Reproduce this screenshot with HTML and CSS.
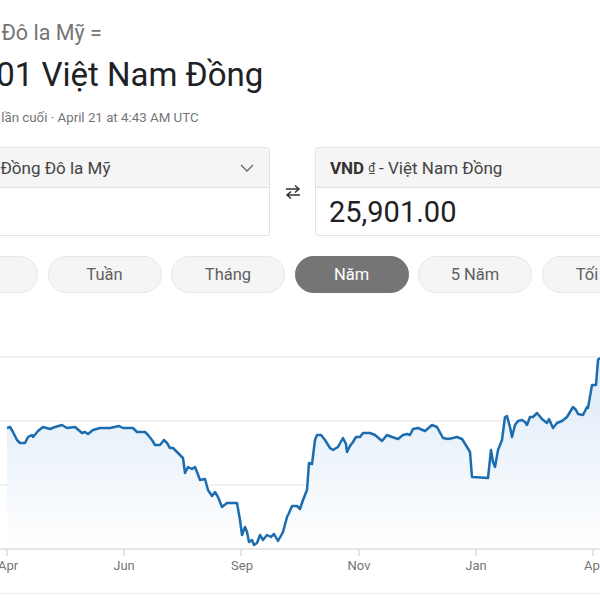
FILE: index.html
```html
<!DOCTYPE html>
<html lang="vi">
<head>
    <meta charset="UTF-8">
    <meta name="viewport" content="width=device-width, initial-scale=1.0">
    <title>Đô la Mỹ sang Việt Nam Đồng</title>
    <link rel="stylesheet" href="styles.css">
</head>
<body>

<div class="converter">
    <div class="rate-from">1 Đồng Đô la Mỹ =</div>
    <div class="rate-to">25,901 Việt Nam Đồng</div>
    <div class="updated">Cập nhật lần cuối · April 21 at 4:43 AM UTC</div>

    <div class="panels">
        <div class="box">
            <div class="box-head from">
                <span class="code">USD</span>
                <span class="symbol">$</span>
                <span class="name">- Đồng Đô la Mỹ</span>
                <svg class="chevron" width="14" height="8" viewBox="0 0 14 8">
                    <path d="M1 1 L7 7 L13 1" fill="none" stroke="#666" stroke-width="1.3"/>
                </svg>
            </div>
            <div class="box-value"></div>
        </div>

        <div class="swap">
            <svg width="16" height="16" viewBox="0 0 16 16">
                <path d="M1 5 H14 M10 1.5 L14 5 L10 8.5" fill="none" stroke="#333" stroke-width="1.5"/>
                <path d="M15 11 H2 M6 7.5 L2 11 L6 14.5" fill="none" stroke="#333" stroke-width="1.5"/>
            </svg>
        </div>

        <div class="box">
            <div class="box-head">
                <span class="code">VND</span>
                <span class="symbol">₫</span>
                <span class="name">- Việt Nam Đồng</span>
            </div>
            <div class="box-value">25,901.00</div>
        </div>
    </div>

    <div class="ranges">
        <button class="range">Ngày</button>
        <button class="range">Tuần</button>
        <button class="range">Tháng</button>
        <button class="range active">Năm</button>
        <button class="range">5 Năm</button>
        <button class="range">Tối đa</button>
    </div>
</div>

<svg class="chart" width="600" height="260" viewBox="0 340 600 260">
    <defs>
        <linearGradient id="area" x1="0" y1="0" x2="0" y2="1">
            <stop offset="0" stop-color="#dce9f7"/>
            <stop offset="1" stop-color="#ffffff"/>
        </linearGradient>
    </defs>

    <line x1="0" y1="357" x2="600" y2="357" class="grid"/>
    <line x1="0" y1="421" x2="600" y2="421" class="grid"/>
    <line x1="0" y1="485" x2="600" y2="485" class="grid"/>

    <path class="area" d="M7 428 L10 427 L13 432 L17 440 L20 443 L25 443 L28 437 L32 435 L33 437 L38 431 L43 427 L50 429 L55 427 L62 425 L67 428 L75 427 L82 433 L85 432 L88 434 L93 430 L100 428 L110 428 L119 426 L123 428 L133 428 L137 432 L145 432 L148 435 L152 440 L155 445 L160 445 L164 440 L167 443 L170 448 L173 448 L178 453 L183 458 L185 473 L188 467 L192 469 L195 467 L197 472 L200 480 L205 479 L208 490 L212 496 L215 492 L218 497 L222 507 L227 503 L233 503 L237 503 L240 520 L242 535 L245 527 L247 532 L249 542 L252 540 L254 545 L257 543 L260 535 L263 540 L267 535 L271 537 L274 534 L278 541 L283 532 L287 517 L289 513 L292 506 L297 506 L300 509 L303 500 L307 490 L309 463 L312 464 L315 440 L317 435 L321 435 L325 440 L330 448 L333 450 L338 447 L343 438 L346 444 L347 452 L350 446 L353 442 L356 437 L360 437 L363 433 L370 433 L375 435 L382 441 L387 435 L392 437 L398 439 L403 435 L407 434 L410 435 L413 429 L418 428 L425 431 L432 425 L437 427 L443 438 L448 439 L453 438 L457 437 L462 439 L467 447 L470 452 L472 477 L473 477 L488 478 L491 450 L493 462 L495 467 L498 450 L502 440 L505 417 L507 416 L510 427 L512 437 L515 425 L518 421 L522 420 L525 422 L527 425 L530 417 L533 417 L537 413 L542 419 L547 423 L549 419 L553 428 L557 423 L562 421 L567 417 L570 412 L573 407 L576 410 L578 414 L583 415 L587 407 L588 408 L592 385 L596 385 L598 360 L600 358 L600 549 L7 549 Z"/>

    <path class="line" d="M7 428 L10 427 L13 432 L17 440 L20 443 L25 443 L28 437 L32 435 L33 437 L38 431 L43 427 L50 429 L55 427 L62 425 L67 428 L75 427 L82 433 L85 432 L88 434 L93 430 L100 428 L110 428 L119 426 L123 428 L133 428 L137 432 L145 432 L148 435 L152 440 L155 445 L160 445 L164 440 L167 443 L170 448 L173 448 L178 453 L183 458 L185 473 L188 467 L192 469 L195 467 L197 472 L200 480 L205 479 L208 490 L212 496 L215 492 L218 497 L222 507 L227 503 L233 503 L237 503 L240 520 L242 535 L245 527 L247 532 L249 542 L252 540 L254 545 L257 543 L260 535 L263 540 L267 535 L271 537 L274 534 L278 541 L283 532 L287 517 L289 513 L292 506 L297 506 L300 509 L303 500 L307 490 L309 463 L312 464 L315 440 L317 435 L321 435 L325 440 L330 448 L333 450 L338 447 L343 438 L346 444 L347 452 L350 446 L353 442 L356 437 L360 437 L363 433 L370 433 L375 435 L382 441 L387 435 L392 437 L398 439 L403 435 L407 434 L410 435 L413 429 L418 428 L425 431 L432 425 L437 427 L443 438 L448 439 L453 438 L457 437 L462 439 L467 447 L470 452 L472 477 L473 477 L488 478 L491 450 L493 462 L495 467 L498 450 L502 440 L505 417 L507 416 L510 427 L512 437 L515 425 L518 421 L522 420 L525 422 L527 425 L530 417 L533 417 L537 413 L542 419 L547 423 L549 419 L553 428 L557 423 L562 421 L567 417 L570 412 L573 407 L576 410 L578 414 L583 415 L587 407 L588 408 L592 385 L596 385 L598 360 L600 358"/>

    <line x1="0" y1="549" x2="600" y2="549" class="axis"/>
    <line x1="7" y1="549" x2="7" y2="556" class="axis"/>
    <line x1="124" y1="549" x2="124" y2="556" class="axis"/>
    <line x1="241" y1="549" x2="241" y2="556" class="axis"/>
    <line x1="359" y1="549" x2="359" y2="556" class="axis"/>
    <line x1="476" y1="549" x2="476" y2="556" class="axis"/>
    <line x1="593" y1="549" x2="593" y2="556" class="axis"/>

    <text x="8" y="570" class="label">Apr</text>
    <text x="124" y="570" class="label">Jun</text>
    <text x="242" y="570" class="label">Sep</text>
    <text x="359" y="570" class="label">Nov</text>
    <text x="476" y="570" class="label">Jan</text>
    <text x="594" y="570" class="label">Apr</text>

    <line x1="0" y1="593.5" x2="600" y2="593.5" class="bottom"/>
</svg>

</body>
</html>
```

FILE: styles.css
```css
body {
    margin: 0;
    font-family: Roboto, "Noto Sans", Arial, sans-serif;
    background-color: #fff;
    color: #202124;
    overflow: hidden;
}

.converter {
    margin-left: -64px;
    width: 713px;
    padding-top: 21px;
}

.rate-from {
    margin-left: -8px;
    font-size: 21.5px;
    line-height: 24px;
    color: #757575;
}

.rate-to {
    margin-top: 10px;
    margin-left: -2px;
    font-size: 33px;
    line-height: 40px;
    color: #202124;
}

.updated {
    margin-top: 15px;
    margin-left: 9px;
    font-size: 13.3px;
    line-height: 16px;
    color: #757575;
}

.panels {
    display: flex;
    align-items: center;
    margin-top: 21px;
}

.box {
    width: 332px;
    border: 1px solid #e3e3e3;
    border-radius: 3px;
}

.box-head {
    display: flex;
    align-items: center;
    height: 39px;
    padding: 0 14px;
    background-color: #f5f5f5;
    border-bottom: 1px solid #e3e3e3;
    font-size: 17px;
    color: #444;
}

.box-head.from {
    padding-left: 7px;
}

.code {
    font-weight: bold;
    color: #333;
}

.symbol {
    margin: 0 4px;
    font-size: 12px;
    text-decoration: underline;
}

.chevron {
    margin-left: auto;
    margin-right: 1px;
}

.box-value {
    display: flex;
    align-items: center;
    height: 47px;
    padding: 0 13px;
    font-size: 29px;
    color: #202124;
}

.swap {
    display: flex;
    justify-content: center;
    align-items: center;
    width: 45px;
}

.ranges {
    display: flex;
    gap: 9.5px;
    margin-top: 20px;
    margin-left: -12px;
}

.range {
    flex: none;
    width: 114px;
    height: 37px;
    border: 1px solid #e6e6e6;
    border-radius: 19px;
    background-color: #f5f5f5;
    font-family: Roboto, "Noto Sans", Arial, sans-serif;
    font-size: 16.5px;
    color: #5f5f5f;
    cursor: pointer;
}

.range.active {
    background-color: #757575;
    border-color: #757575;
    color: #fff;
}

.chart {
    display: block;
    margin-top: 47px;
}

.grid {
    stroke: #ececec;
    stroke-width: 1.5;
}

.area {
    fill: url(#area);
}

.line {
    fill: none;
    stroke: #1c6cb0;
    stroke-width: 2.5;
    stroke-linejoin: round;
}

.axis {
    stroke: #dcdcdc;
    stroke-width: 1.5;
}

.label {
    font-family: Roboto, "Noto Sans", Arial, sans-serif;
    font-size: 13px;
    fill: #757575;
    text-anchor: middle;
}

.bottom {
    stroke: #eeeeee;
    stroke-width: 1;
}
```
